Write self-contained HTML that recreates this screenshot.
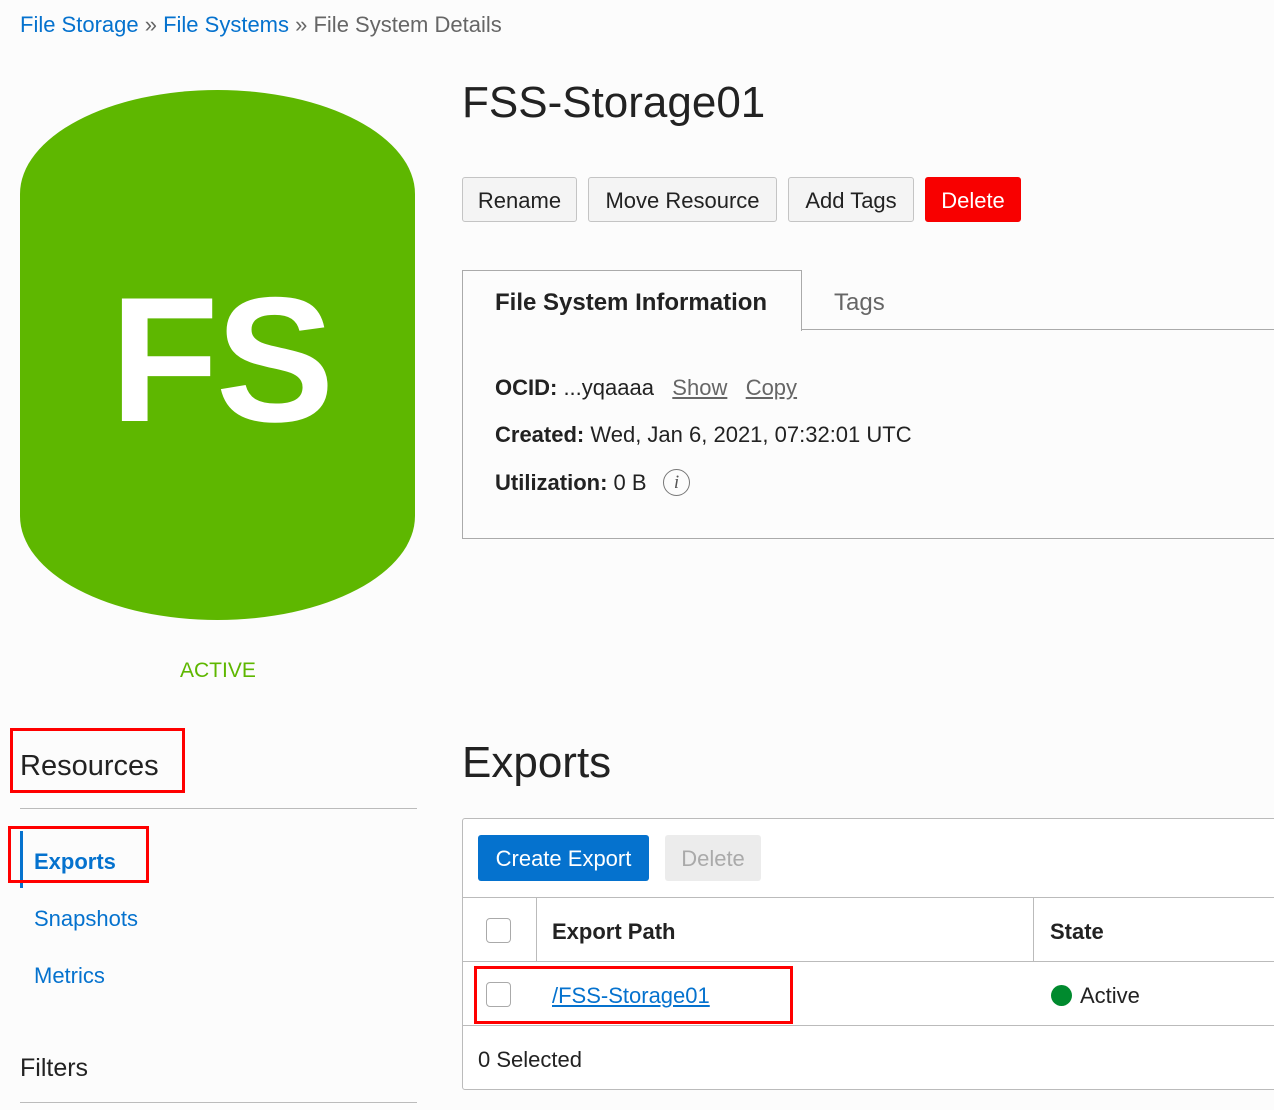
<!DOCTYPE html>
<html><head><meta charset="utf-8"><style>
body{margin:0;width:1274px;height:1110px;background:#fcfcfc;font-family:"Liberation Sans",sans-serif;position:relative;overflow:hidden;color:#222}
.a{position:absolute;white-space:nowrap}
.btn{position:absolute;top:177px;height:45px;border:1px solid #c4c4c4;border-radius:3px;background:#f4f4f4;font-size:22px;line-height:45px;text-align:center;color:#222;box-sizing:border-box}
.lk{color:#0572ce}
.red{position:absolute;border:3px solid #f00;box-sizing:border-box}
.cb{position:absolute;width:25px;height:25px;border:1px solid #aaa;border-radius:4px;background:#fff;box-sizing:border-box}
</style></head><body>
<div class="a" style="left:20px;top:12px;font-size:22px;color:#666"><span class="lk">File Storage</span> » <span class="lk">File Systems</span> » File System Details</div>

<div class="a" style="left:20px;top:90px;width:395px;height:530px;background:#5eb700;border-radius:50% / 104px"></div>
<div class="a" style="left:110px;top:257px;font-size:178px;font-weight:bold;color:#fff;letter-spacing:-3px">FS</div>
<div class="a" style="left:180px;top:659px;font-size:21px;color:#5eb700">ACTIVE</div>

<div class="a" style="left:462px;top:78px;font-size:44px;color:#222">FSS-Storage01</div>
<div class="btn" style="left:462px;width:115px">Rename</div>
<div class="btn" style="left:588px;width:189px">Move Resource</div>
<div class="btn" style="left:788px;width:126px">Add Tags</div>
<div class="btn" style="left:925px;width:96px;background:#f80000;border-color:#f80000;color:#fff">Delete</div>

<div class="a" style="left:462px;top:329px;width:812px;border-top:1px solid #aaa"></div>
<div class="a" style="left:462px;top:270px;width:340px;height:61px;border:1px solid #aaa;border-bottom:none;background:#fcfcfc;box-sizing:border-box"></div>
<div class="a" style="left:462px;top:538px;width:812px;border-top:1px solid #aaa"></div>
<div class="a" style="left:462px;top:330px;height:209px;border-left:1px solid #aaa"></div>
<div class="a" style="left:495px;top:289px;font-size:24px;font-weight:bold">File System Information</div>
<div class="a" style="left:834px;top:289px;font-size:24px;color:#666">Tags</div>
<div class="a" style="left:495px;top:375px;font-size:22px"><b>OCID:</b> ...yqaaaa &nbsp; <span style="color:#666;text-decoration:underline">Show</span> &nbsp; <span style="color:#666;text-decoration:underline">Copy</span></div>
<div class="a" style="left:495px;top:422px;font-size:22px"><b>Created:</b> Wed, Jan 6, 2021, 07:32:01 UTC</div>
<div class="a" style="left:495px;top:470px;font-size:22px"><b>Utilization:</b> 0 B</div>
<div class="a" style="left:663px;top:469px;width:27px;height:27px;border:1.5px solid #777;border-radius:50%;box-sizing:border-box;font-family:'Liberation Serif',serif;font-style:italic;font-size:19px;line-height:25px;text-align:center;color:#555">i</div>

<div class="a" style="left:20px;top:750px;font-size:29px;color:#222">Resources</div>
<div class="red" style="left:10px;top:728px;width:175px;height:65px"></div>
<div class="a" style="left:20px;top:808px;width:397px;border-top:1px solid #bbb"></div>
<div class="a" style="left:20px;top:831px;width:3px;height:57px;background:#0572ce"></div>
<div class="a lk" style="left:34px;top:849px;font-size:22px;font-weight:bold">Exports</div>
<div class="red" style="left:8px;top:826px;width:141px;height:57px"></div>
<div class="a lk" style="left:34px;top:906px;font-size:22px">Snapshots</div>
<div class="a lk" style="left:34px;top:963px;font-size:22px">Metrics</div>
<div class="a" style="left:20px;top:1054px;font-size:25px;color:#222">Filters</div>
<div class="a" style="left:20px;top:1102px;width:397px;border-top:1px solid #bbb"></div>

<div class="a" style="left:462px;top:738px;font-size:44px;color:#222">Exports</div>
<div class="a" style="left:462px;top:818px;width:830px;height:272px;border:1px solid #bbb;border-radius:3px;background:#fff;box-sizing:border-box"></div>
<div class="a" style="left:478px;top:835px;width:171px;height:46px;background:#0572ce;border-radius:3px;color:#fff;font-size:22px;line-height:47px;text-align:center">Create Export</div>
<div class="a" style="left:665px;top:835px;width:96px;height:46px;background:#ececec;border-radius:3px;color:#aaa;font-size:22px;line-height:47px;text-align:center">Delete</div>
<div class="a" style="left:463px;top:897px;width:811px;border-top:1px solid #bbb"></div>
<div class="a" style="left:463px;top:961px;width:811px;border-top:1px solid #bbb"></div>
<div class="a" style="left:463px;top:1025px;width:811px;border-top:1px solid #bbb"></div>
<div class="a" style="left:536px;top:897px;height:64px;border-left:1px solid #bbb"></div>
<div class="a" style="left:1033px;top:897px;height:64px;border-left:1px solid #bbb"></div>
<div class="cb" style="left:486px;top:918px"></div>
<div class="a" style="left:552px;top:919px;font-size:22px;font-weight:bold">Export Path</div>
<div class="a" style="left:1050px;top:919px;font-size:22px;font-weight:bold">State</div>
<div class="cb" style="left:486px;top:982px"></div>
<div class="a lk" style="left:552px;top:983px;font-size:22px;text-decoration:underline">/FSS-Storage01</div>
<div class="red" style="left:474px;top:966px;width:319px;height:58px"></div>
<div class="a" style="left:1051px;top:985px;width:21px;height:21px;border-radius:50%;background:#008a2e"></div>
<div class="a" style="left:1080px;top:983px;font-size:22px">Active</div>
<div class="a" style="left:478px;top:1047px;font-size:22px">0 Selected</div>
</body></html>
